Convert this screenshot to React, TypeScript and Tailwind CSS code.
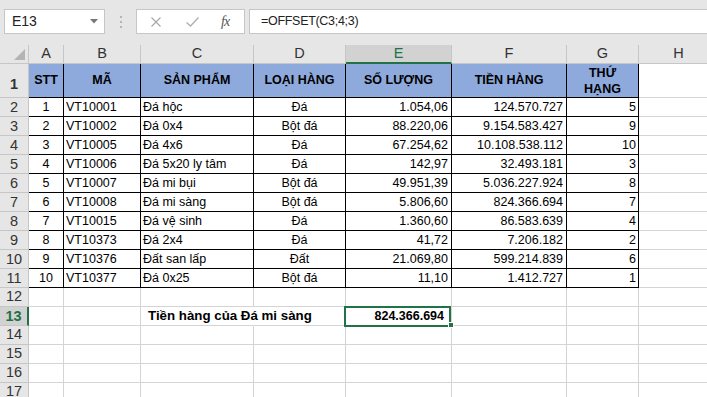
import React from 'react';

type Row = [number, string, string, string, string, string, number];

const rows: Row[] = [
  [1, 'VT10001', 'Đá hộc', 'Đá', '1.054,06', '124.570.727', 5],
  [2, 'VT10002', 'Đá 0x4', 'Bột đá', '88.220,06', '9.154.583.427', 9],
  [3, 'VT10005', 'Đá 4x6', 'Đá', '67.254,62', '10.108.538.112', 10],
  [4, 'VT10006', 'Đá 5x20 ly tâm', 'Đá', '142,97', '32.493.181', 3],
  [5, 'VT10007', 'Đá mi bụi', 'Bột đá', '49.951,39', '5.036.227.924', 8],
  [6, 'VT10008', 'Đá mi sàng', 'Bột đá', '5.806,60', '824.366.694', 7],
  [7, 'VT10015', 'Đá vệ sinh', 'Đá', '1.360,60', '86.583.639', 4],
  [8, 'VT10373', 'Đá 2x4', 'Đá', '41,72', '7.206.182', 2],
  [9, 'VT10376', 'Đất san lấp', 'Đất', '21.069,80', '599.214.839', 6],
  [10, 'VT10377', 'Đá 0x25', 'Bột đá', '11,10', '1.412.727', 1],
];

const widths = ['w-[35px]', 'w-[77px]', 'w-[113px]', 'w-[92px]', 'w-[106px]', 'w-[115px]', 'w-[72px]', 'w-[80px]'];
const letters = ['A', 'B', 'C', 'D', 'E', 'F', 'G', 'H'];

const RowHead: React.FC<{ n: number; tall?: boolean; active?: boolean }> = ({ n, tall, active }) => (
  <div
    className={
      'w-[29px] shrink-0 flex justify-center pb-[1px] text-[14.5px] ' +
      (tall ? 'items-end ' : 'items-center ') +
      (active
        ? 'bg-[#d2d2d2] text-[#217346] border-b border-b-[#c6c6c6] border-r-2 border-r-[#217346]'
        : 'bg-[#e6e6e6] text-[#333] border-b border-r border-[#c6c6c6]')
    }
  >
    {n}
  </div>
);

const EmptyRow: React.FC<{ n: number }> = ({ n }) => (
  <div className="flex h-[19px]">
    <RowHead n={n} />
    {widths.map((w, i) => (
      <div key={i} className={w + ' shrink-0 border-r border-b border-[#d4d4d4]'} />
    ))}
  </div>
);

export default function App() {
  return (
    <div className="w-[707px] h-[397px] overflow-hidden bg-white font-['Liberation_Sans',Arial,sans-serif] text-black">
      {/* formula bar */}
      <div className="h-[45px] bg-[#e6e6e6] flex items-start pt-[9px] pl-[4px]">
        <div className="w-[101px] h-[25px] shrink-0 bg-white border border-[#c6c6c6] flex items-center justify-between pl-[7px] pr-[6px] text-[14px] text-[#222]">
          <span>E13</span>
          <svg width="8" height="5" viewBox="0 0 8 5"><path d="M0 0h8L4 4.5z" fill="#777" /></svg>
        </div>
        <div className="w-[31px] h-[25px] shrink-0 flex flex-col items-center justify-center gap-[3px]">
          <span className="w-[2px] h-[2px] bg-[#b5b5b5]" />
          <span className="w-[2px] h-[2px] bg-[#b5b5b5]" />
          <span className="w-[2px] h-[2px] bg-[#b5b5b5]" />
        </div>
        <div className="w-[109px] h-[25px] shrink-0 bg-white border border-[#c6c6c6] flex items-center">
          <svg className="ml-[14px]" width="10" height="10" viewBox="0 0 10 10">
            <path d="M0.5 0.5l9 9M9.5 0.5l-9 9" stroke="#a8a8a8" strokeWidth="1.2" fill="none" />
          </svg>
          <svg className="ml-[25px]" width="13" height="10" viewBox="0 0 13 10">
            <path d="M0.5 5.5l4 3.5 8-8.5" stroke="#b0b0b0" strokeWidth="1.4" fill="none" />
          </svg>
          <span className="ml-[22px] font-['Liberation_Serif',serif] italic text-[14px] text-[#555] tracking-[-1px]">fx</span>
        </div>
        <div className="ml-[4px] w-[470px] h-[25px] shrink-0 bg-white border border-[#c6c6c6] flex items-center pl-[11px] text-[12.5px] tracking-[-0.3px] text-[#222]">
          =OFFSET(C3;4;3)
        </div>
      </div>

      {/* column headers */}
      <div className="flex h-[19px]">
        <div className="w-[29px] shrink-0 bg-[#e6e6e6] border-r border-b border-[#c6c6c6] flex items-end justify-end pr-[3px] pb-[3px]">
          <svg width="11" height="11" viewBox="0 0 11 11"><path d="M11 0v11H0z" fill="#b4b4b4" /></svg>
        </div>
        {letters.map((l, i) => (
          <div
            key={l}
            className={
              widths[i] +
              ' shrink-0 flex items-center justify-center text-[14.5px] ' +
              (l === 'E'
                ? 'bg-[#d2d2d2] text-[#217346] border-r border-r-[#c6c6c6] border-b-2 border-b-[#217346]'
                : 'bg-[#e6e6e6] text-[#333] border-r border-b border-[#c6c6c6]')
            }
          >
            {l}
          </div>
        ))}
      </div>

      {/* row 1: table header */}
      <div className="flex h-[34px] text-[12.5px] font-bold">
        <RowHead n={1} tall />
        {['STT', 'MÃ', 'SẢN PHẨM', 'LOẠI HÀNG', 'SỐ LƯỢNG', 'TIỀN HÀNG'].map((t, i) => (
          <div key={t} className={widths[i] + ' shrink-0 bg-[#8ea9db] border-r border-b border-black flex items-center justify-center'}>
            {t}
          </div>
        ))}
        <div className="w-[72px] shrink-0 bg-[#8ea9db] border-r border-b border-black flex flex-col items-center justify-center leading-[16px]">
          <span>THỨ</span>
          <span>HẠNG</span>
        </div>
        <div className="w-[80px] shrink-0 border-r border-b border-[#d4d4d4]" />
      </div>

      {/* data rows */}
      {rows.map((r, idx) => (
        <div key={r[0]} className="flex h-[19px] text-[12.5px] leading-[18px]">
          <RowHead n={idx + 2} />
          <div className="w-[35px] shrink-0 border-r border-b border-black text-center">{r[0]}</div>
          <div className="w-[77px] shrink-0 border-r border-b border-black pl-[2px]">{r[1]}</div>
          <div className="w-[113px] shrink-0 border-r border-b border-black pl-[2px]">{r[2]}</div>
          <div className="w-[92px] shrink-0 border-r border-b border-black text-center">{r[3]}</div>
          <div className="w-[106px] shrink-0 border-r border-b border-black text-right pr-[3px]">{r[4]}</div>
          <div className="w-[115px] shrink-0 border-r border-b border-black text-right pr-[3px]">{r[5]}</div>
          <div className="w-[72px] shrink-0 border-r border-b border-black text-right pr-[2px]">{r[6]}</div>
          <div className="w-[80px] shrink-0 border-r border-b border-[#d4d4d4]" />
        </div>
      ))}

      <EmptyRow n={12} />

      {/* row 13: lookup result */}
      <div className="flex h-[19px] text-[12.5px] leading-[18px] font-bold">
        <RowHead n={13} active />
        <div className="w-[35px] shrink-0 border-r border-b border-[#d4d4d4]" />
        <div className="w-[77px] shrink-0 border-r border-b border-[#d4d4d4]" />
        <div className="w-[113px] shrink-0 border-b border-r border-r-transparent border-b-[#d4d4d4] pl-[7px] whitespace-nowrap overflow-visible text-[13.3px]">
          Tiền hàng của Đá mi sàng
        </div>
        <div className="w-[92px] shrink-0 border-r border-b border-[#d4d4d4]" />
        <div className="w-[106px] shrink-0 border-r border-b border-[#d4d4d4] text-right pr-[7px] relative">
          824.366.694
          <div className="absolute -left-[2px] -top-[1px] w-[107px] h-[21px] border-2 border-[#217346]" />
          <div className="absolute -right-[3px] bottom-[-3px] w-[6px] h-[6px] bg-[#217346] border border-white" />
        </div>
        <div className="w-[115px] shrink-0 border-r border-b border-[#d4d4d4]" />
        <div className="w-[72px] shrink-0 border-r border-b border-[#d4d4d4]" />
        <div className="w-[80px] shrink-0 border-r border-b border-[#d4d4d4]" />
      </div>

      <EmptyRow n={14} />
      <EmptyRow n={15} />
      <EmptyRow n={16} />
      <EmptyRow n={17} />
    </div>
  );
}
